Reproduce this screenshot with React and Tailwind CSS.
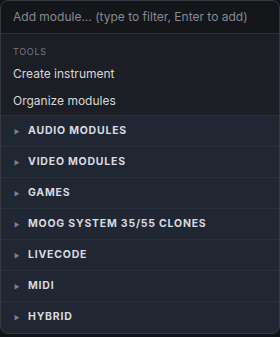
const categories = [
  "Audio modules",
  "Video modules",
  "Games",
  "Moog System 35/55 clones",
  "Livecode",
  "MIDI",
  "Hybrid",
];

const tools = ["Create instrument", "Organize modules"];

export default function App() {
  return (
    <div className="w-[280px] h-[337px] bg-[#111317] font-['Inter',sans-serif]">
      <div className="h-[334px] border border-[#343942] rounded-lg overflow-hidden flex flex-col bg-[#202632]">
        <div className="h-[33px] shrink-0 flex items-center px-3 bg-[#14161a] border-b border-[#2b2f37]">
          <span className="text-[12px] text-[#868a92] whitespace-nowrap">
            Add module... (type to filter, Enter to add)
          </span>
        </div>

        <div className="bg-[#1b1e24] pt-[12px] h-[81px] shrink-0">
          <div className="px-3 text-[9px] leading-[12px] tracking-[0.08em] text-[#777b83]">TOOLS</div>
          <div className="mt-[2px]">
            {tools.map((t) => (
              <div key={t} className="h-[27px] flex items-center px-3 text-[12px] text-[#d6d8dc]">
                {t}
              </div>
            ))}
          </div>
        </div>

        <div className="flex flex-col">
          {categories.map((c) => (
            <div
              key={c}
              className="h-[31px] flex items-center border-t border-[#2a313c] px-3"
            >
              <span className="text-[6px] text-[#7b808a] w-[15px] pl-[1px]">▶</span>
              <span className="text-[10.5px] font-bold uppercase tracking-[0.075em] text-[#d8dbe0]">
                {c}
              </span>
            </div>
          ))}
        </div>
      </div>
    </div>
  );
}
